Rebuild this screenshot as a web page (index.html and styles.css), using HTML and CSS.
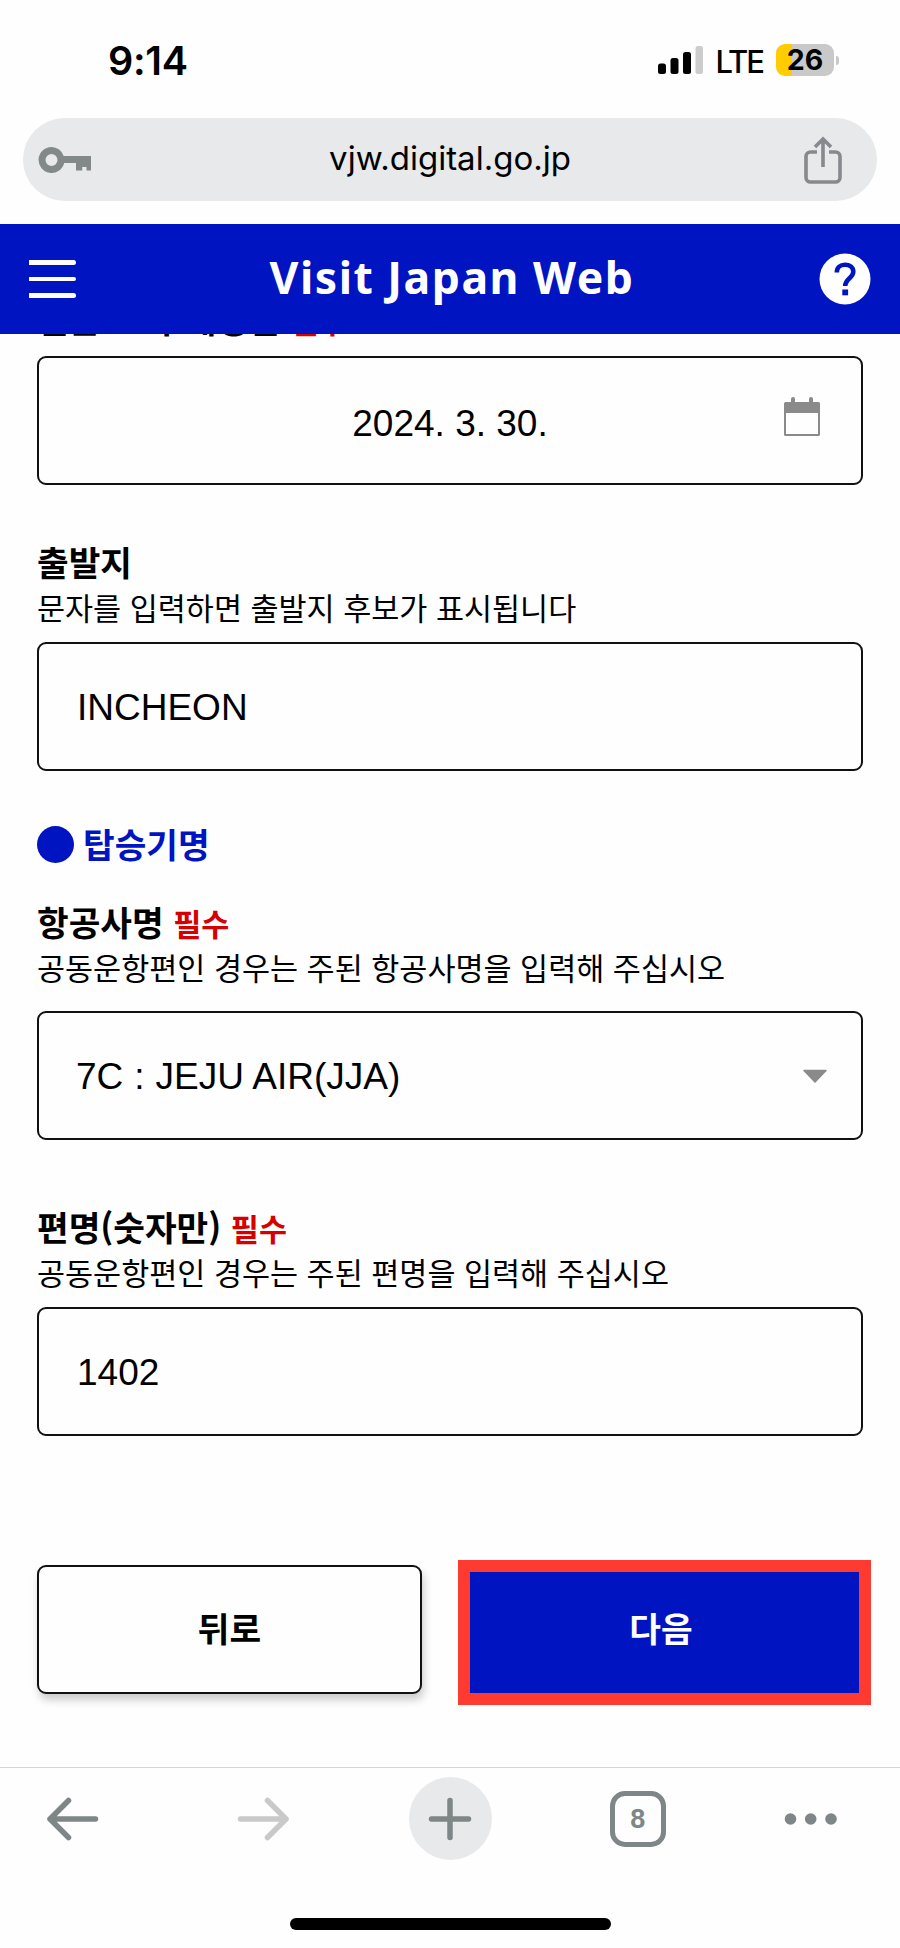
FILE: index.html
```html
<!DOCTYPE html>
<html lang="ko">
<head>
<meta charset="utf-8">
<title>Visit Japan Web</title>
<link rel="stylesheet" href="styles.css">
</head>
<body>
<div class="screen">
  <div class="status">
    <span class="time">9:14</span>
    <svg class="signal" width="46" height="30" viewBox="0 0 46 30"><rect x="0" y="18.5" width="8" height="10.5" rx="2.5"/><rect x="12.500" y="13" width="8" height="16" rx="2.500"/><rect x="25" y="7" width="8" height="22" rx="2.500"/><rect x="37.500" y="1" width="7.500" height="28" rx="2.500" fill="#ccc"/></svg>
    <span class="lte">LTE</span>
    <span class="battery">26</span>
    <span class="nub"></span>
  </div>
  <div class="omnibox">
    <svg class="key" width="53" height="28" viewBox="0 0 53 28" fill="#838889"><path fill-rule="evenodd" d="M13.500 1a13 13 0 0 1 12.200 9H53v14.500h-4.500V21h-4.300v3.500H38V17H26.200A13 13 0 1 1 13.500 1zm0 7a6 6 0 1 0 0 12 6 6 0 0 0 0-12z"/></svg>
    <span class="url">vjw.digital.go.jp</span>
    <svg class="share" width="38" height="48" viewBox="0 0 38 48" fill="none" stroke="#868a8e" stroke-width="3.600"><path d="M13 16H6.500a4.500 4.500 0 0 0-4.500 4.500v21A4.500 4.500 0 0 0 6.500 46h25a4.500 4.500 0 0 0 4.500-4.500v-21a4.500 4.500 0 0 0-4.500-4.500H25M19 31V3.500M11 11l8-8 8 8"/></svg>
  </div>
  <header class="header">
    <div class="menu"><i></i><i></i><i></i></div>
    <h1 class="title">Visit Japan Web</h1>
    <svg class="help" width="52" height="52" viewBox="0 0 52 52"><circle cx="26" cy="26" r="25.500" fill="#fff"/><path d="M17.800 19.500c0-5 3.600-7.700 8.200-7.700 4.700 0 8.300 2.600 8.300 7 0 6.200-8.100 6.800-8.100 14.200" fill="none" stroke="#0014c1" stroke-width="4.600"/><rect x="23.300" y="36.500" width="5.800" height="5.800" fill="#0014c1"/></svg>
  </header>
  <main class="main">
    <div class="label arrival">일본 도착 예정일 <span class="req">필수</span></div>
    <div class="field date"><span>2024. 3. 30.</span>
      <svg class="calendar" width="38" height="41" viewBox="0 0 38 41" fill="#8a8a8a"><path fill-rule="evenodd" d="M8 3a2 2 0 0 1 4 0v3h14V3a2 2 0 0 1 4 0v3h5.500A1.500 1.500 0 0 1 37 7.500v31a1.500 1.500 0 0 1-1.500 1.500h-33A1.500 1.500 0 0 1 1 38.500v-31A1.500 1.500 0 0 1 2.500 6H8zM3 17v21h32V17z"/></svg>
    </div>
    <div class="label origin">출발지</div>
    <div class="hint">문자를 입력하면 출발지 후보가 표시됩니다</div>
    <div class="field">INCHEON</div>
    <h2 class="section"><i class="dot"></i>탑승기명</h2>
    <div class="label">항공사명 <span class="req">필수</span></div>
    <div class="hint airline">공동운항편인 경우는 주된 항공사명을 입력해 주십시오</div>
    <div class="field select"><span class="airline-name">7C<span class="colon">:</span>JEJU AIR(JJA)</span>
      <svg class="caret" width="26" height="16" viewBox="0 0 26 16"><path d="M2 1.500h22L13 13z" fill="#8a8a8a" stroke="#8a8a8a" stroke-width="1.500" stroke-linejoin="round"/></svg>
    </div>
    <div class="label flight">편명(숫자만) <span class="req">필수</span></div>
    <div class="hint">공동운항편인 경우는 주된 편명을 입력해 주십시오</div>
    <div class="field">1402</div>
    <div class="actions">
      <button class="btn back">뒤로</button>
      <button class="btn next">다음</button>
    </div>
  </main>
  <nav class="toolbar">
    <svg width="54" height="46" viewBox="0 0 54 46" fill="none" stroke="#7f8687" stroke-width="5.500" stroke-linecap="round" stroke-linejoin="round"><path d="M49.500 23H4M22.500 4.500L4 23l18.500 18.500"/></svg>
    <svg class="forward" width="54" height="46" viewBox="0 0 54 46" fill="none" stroke="#c9c9c9" stroke-width="5.500" stroke-linecap="round" stroke-linejoin="round"><path d="M4.500 23H50M31.500 4.500L50 23 31.500 41.500"/></svg>
    <span class="plus"><svg width="44" height="44" viewBox="0 0 44 44" stroke="#7f8687" stroke-width="5.500" stroke-linecap="round"><path d="M22 3.500v37M3.500 22h37"/></svg></span>
    <span class="tabs">8</span>
    <svg width="54" height="14" viewBox="0 0 54 14" fill="#7f8687"><circle cx="6.500" cy="7" r="5.800"/><circle cx="26.700" cy="7" r="5.800"/><circle cx="47" cy="7" r="5.800"/></svg>
  </nav>
  <div class="home"></div>
</div>
</body>
</html>
```
FILE: styles.css
```css
* { box-sizing: border-box; }
body { margin: 0; background: #fff; color: #000; font-family: "Liberation Sans", "Noto Sans CJK KR", sans-serif; }
.screen { width: 900px; height: 1948px; display: flex; flex-direction: column; overflow: hidden; background: #fefefe; }

.status { height: 118px; padding: 0 61px 0 108px; display: flex; align-items: center; flex: none; font-family: Inter, sans-serif; }
.time { font-size: 39.5px; font-weight: 600; line-height: 40px; margin-right: auto; margin-top: 3px; letter-spacing: -0.3px; }
.signal { margin-right: 11px; margin-top: 1px; }
.lte { font-size: 31px; line-height: 32px; font-weight: 500; margin: 5px 13px 0 0; letter-spacing: -2px; }
.battery { width: 58px; height: 32px; margin-top: 2px; border-radius: 9px; background: linear-gradient(90deg, #fc0 16px, #c9c9c9 16px); font-size: 28.5px; line-height: 32px; font-weight: 700; text-align: center; }
.nub { width: 3px; height: 9px; margin: 3px 0 0 2px; border-radius: 0 4px 4px 0; background: #c9c9c9; }

.omnibox { flex: none; height: 83px; margin: 0 23px; padding: 0 35px 0 15px; border-radius: 42px; background: #e7e9ea; display: flex; align-items: center; justify-content: space-between; }
.url { font: 33px/40px Inter, sans-serif; margin-left: 5px; margin-bottom: 4px; }

.header { flex: none; height: 110px; margin-top: 23px; padding: 0 29px 0 29px; background: #0014c1; color: #fff; display: flex; align-items: center; justify-content: space-between; }
.menu { display: grid; gap: 12px; width: 47px; }
.menu i { height: 4.500px; background: #fff; border-radius: 0 3px 3px 0; }
.title { margin: 0 0 5px 9px; font: 700 44.5px/60px "Noto Sans", sans-serif; letter-spacing: 1.5px; }

.main { flex: none; height: 1434px; padding: 0 37px; overflow: hidden; border-bottom: 1px solid #d5d6d7; }
.label, .section { height: 46px; margin: 32px 0 0; font: 700 34.4px/46px "Noto Sans CJK KR", sans-serif; white-space: nowrap; }
.label.arrival { margin: -39px 0 15px; word-spacing: 1px; }
.label.origin { margin-top: 53px; }
.label.flight { margin-top: 63px; }
.req { color: #d60000; font-size: 30.5px; font-weight: 700; line-height: 1; }
.hint { height: 46px; margin-bottom: 12px; font: 400 30.5px/46px "Noto Sans CJK KR", sans-serif; white-space: nowrap; }
.hint.airline { margin-bottom: 21px; }
.field { height: 129px; padding: 2px 37px 0 38px; border: 2px solid #111; border-radius: 9px; background: #fefefe; display: flex; align-items: center; font-size: 37px; }
.date { justify-content: center; position: relative; padding: 7px 38px 0; }
.calendar { position: absolute; right: 40px; top: 38px; }
.select { justify-content: space-between; padding-left: 37px; padding-right: 33px; }
.colon { margin: 0 11px; }
.section { margin-top: 49px; color: #0014c1; display: flex; align-items: center; }
.dot { width: 37px; height: 37px; margin: 2px 9px 0 0; border-radius: 50%; background: #0014c1; }

.actions { display: flex; align-items: flex-start; margin: 124px -8px 0 0; justify-content: space-between; }
.btn { font: 700 34.4px/46px "Noto Sans CJK KR", sans-serif; }
.back { width: 385px; height: 129px; margin-top: 5px; padding: 0 0 6px; border: 2px solid #111; border-radius: 9px; background: #fefefe; color: #000; box-shadow: 2px 6px 9px rgba(0,0,0,.2); }
.next { width: 413px; height: 145px; padding: 0 7px 12px 0; border: 12px solid #ff3a30; background: #0014c1; color: #fff; }

.toolbar { flex: none; height: 101px; padding: 0 62px 0 46px; display: flex; align-items: center; justify-content: space-between; }
.forward { margin-left: 18px; }
.plus { width: 83px; height: 83px; border-radius: 50%; background: #e8e9eb; display: flex; align-items: center; justify-content: center; }
.tabs { width: 56px; height: 56px; border: 5px solid #7f8687; border-radius: 15px; color: #7f8687; font: 700 27px/46px "Liberation Sans", sans-serif; text-align: center; }
.home { width: 321px; height: 12px; margin: 49px auto 0; border-radius: 6px; background: #000; }
```
